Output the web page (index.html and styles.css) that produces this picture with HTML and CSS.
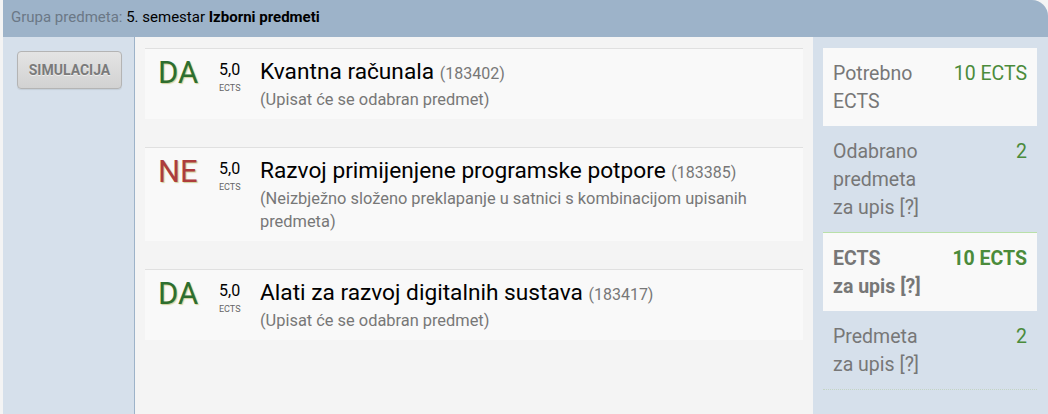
FILE: index.html
```html
<!DOCTYPE html>
<html lang="hr">
<head>
<meta charset="utf-8">
<title>Izborni predmeti</title>
<link rel="stylesheet" href="styles.css">
</head>
<body>
<div class="page">
  <div class="header">
    <span class="hdr-label">Grupa predmeta:</span> 5. semestar <b>Izborni predmeti</b>
  </div>
  <div class="main">
    <aside class="left">
      <button class="sim-btn" type="button">SIMULACIJA</button>
    </aside>
    <section class="list">
      <div class="card">
        <div class="badge yes">DA</div>
        <div class="pts"><span class="pts-num">5,0</span><span class="pts-unit">ECTS</span></div>
        <div class="info">
          <div class="title">Kvantna računala <span class="code">(183402)</span></div>
          <div class="note">(Upisat će se odabran predmet)</div>
        </div>
      </div>
      <div class="card">
        <div class="badge no">NE</div>
        <div class="pts"><span class="pts-num">5,0</span><span class="pts-unit">ECTS</span></div>
        <div class="info">
          <div class="title">Razvoj primijenjene programske potpore <span class="code">(183385)</span></div>
          <div class="note">(Neizbježno složeno preklapanje u satnici s kombinacijom upisanih predmeta)</div>
        </div>
      </div>
      <div class="card">
        <div class="badge yes">DA</div>
        <div class="pts"><span class="pts-num">5,0</span><span class="pts-unit">ECTS</span></div>
        <div class="info">
          <div class="title">Alati za razvoj digitalnih sustava <span class="code">(183417)</span></div>
          <div class="note">(Upisat će se odabran predmet)</div>
        </div>
      </div>
    </section>
    <aside class="summary">
      <div class="stat light">
        <div class="stat-label">Potrebno ECTS</div>
        <div class="stat-val">10 ECTS</div>
      </div>
      <div class="stat">
        <div class="stat-label">Odabrano predmeta <span class="nowrap">za upis <span class="help">[?]</span></span></div>
        <div class="stat-val">2</div>
      </div>
      <div class="stat light strong">
        <div class="stat-label">ECTS <span class="nowrap">za upis <span class="help">[?]</span></span></div>
        <div class="stat-val">10 ECTS</div>
      </div>
      <div class="stat last">
        <div class="stat-label">Predmeta <span class="nowrap">za upis <span class="help">[?]</span></span></div>
        <div class="stat-val">2</div>
      </div>
    </aside>
  </div>
</div>
</body>
</html>
```
FILE: styles.css
```css
html, body {
  margin: 0;
  padding: 0;
}
body {
  background: #f4f4f4;
  font-family: Roboto, "Liberation Sans", Arial, sans-serif;
  overflow: hidden;
}
.page {
  margin-left: 3px;
  height: 414px;
  display: flex;
  flex-direction: column;
}
.header {
  height: 37px;
  line-height: 35px;
  background: #9db3c9;
  border-top-right-radius: 16px;
  padding-left: 8px;
  font-size: 15px;
  color: #000;
  white-space: nowrap;
}
.hdr-label {
  color: #6b7886;
}
.main {
  flex: 1;
  display: grid;
  grid-template-columns: 132px 1fr 235px;
}
.left {
  background: #d6e0eb;
  border-right: 1px solid #9db3c9;
  padding: 14px 0 0 14px;
}
.sim-btn {
  width: 105px;
  height: 38px;
  border: 1px solid #b4b4b4;
  border-radius: 4px;
  background: linear-gradient(#e4e4e4, #d2d2d2);
  color: #7a7a7a;
  font-family: Roboto, "Liberation Sans", Arial, sans-serif;
  font-weight: bold;
  font-size: 14px;
  text-shadow: 0 1px 0 rgba(255,255,255,0.6);
  box-shadow: 0 1px 1px rgba(0,0,0,0.08);
  padding: 0;
}
.list {
  background: #f4f4f4;
  padding: 11px 10px 0 10px;
}
.card {
  display: flex;
  align-items: flex-start;
  background: #f9f9f9;
  border-top: 1px solid #e0e0e0;
  padding: 10px 13px 8px 13px;
  margin-bottom: 28px;
}
.badge {
  width: 61px;
  flex: none;
  font-size: 31px;
  line-height: 30px;
  margin-top: -1px;
  text-shadow: 1px 1px 1px rgba(170,170,60,0.5);
}
.badge.yes { color: #2e6e2e; }
.badge.no { color: #ad3d3d; }
.pts {
  width: 41px;
  flex: none;
  margin-top: 2px;
}
.pts-num {
  display: block;
  font-size: 16px;
  line-height: 18px;
  color: #000;
}
.pts-unit {
  display: block;
  margin-top: 4px;
  font-size: 9px;
  line-height: 10px;
  color: #666;
}
.info {
  flex: 1;
  min-width: 0;
}
.title {
  font-size: 22.7px;
  line-height: 26px;
  color: #000;
}
.code {
  font-size: 16px;
  line-height: 16px;
  color: #777;
}
.note {
  margin-top: 3px;
  font-size: 16.4px;
  line-height: 23px;
  color: #777;
}
.summary {
  background: #d6e0eb;
  padding: 11px 11px 0 10px;
}
.stat {
  display: flex;
  justify-content: space-between;
  align-items: flex-start;
  padding: 12px 10px 10px 10px;
  font-size: 19.5px;
  line-height: 28px;
  color: #777;
}
.stat.light {
  background: #f9f9f9;
}
.stat.strong {
  border-top: 1px solid #b9e0a9;
  font-weight: bold;
}
.stat.last {
  border-bottom: 1px dotted #c4d4c4;
}
.stat-label {
  width: 50%;
}
.stat-val {
  color: #4b8b3b;
  text-align: right;
  white-space: nowrap;
}
.nowrap {
  white-space: nowrap;
}
.help {
  color: #777;
}
```
